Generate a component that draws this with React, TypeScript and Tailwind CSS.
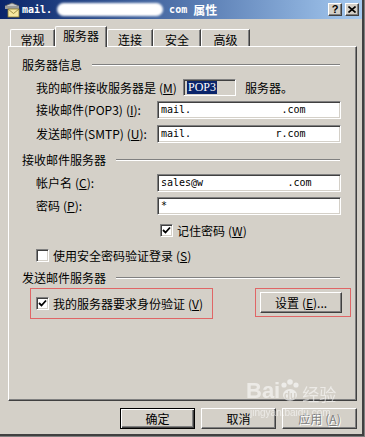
import React from "react";

const cjk = "font-['SimSun','Noto_Sans_CJK_SC',sans-serif]";
const mono = "font-['DejaVu_Sans_Mono',monospace]";

const raised =
  "bg-[#d4d0c8] border-t border-l border-t-white border-l-white border-r border-b border-r-[#404040] border-b-[#404040] shadow-[inset_-1px_-1px_0_#808080]";
const sunken =
  "border-t border-l border-t-[#808080] border-l-[#808080] border-r border-b border-r-white border-b-white shadow-[inset_1px_1px_0_#404040,inset_-1px_-1px_0_#d4d0c8]";

const Key = ({ k }: { k: string }) => (
  <span className="ml-[3px]">
    (<span className="underline underline-offset-1">{k}</span>)
  </span>
);

const GroupHeader = ({ title, mt }: { title: string; mt: string }) => (
  <div className={`flex items-center h-[14px] ml-[13px] mr-[16px] ${mt}`}>
    <span className="text-[12px] leading-none text-black pr-[10px]">{title}</span>
    <div className="flex-1 h-[2px] border-t border-t-[#808080] border-b border-b-white" />
  </div>
);

const TextBox = ({ value }: { value: string }) => (
  <div className={`w-[184px] h-[18px] bg-white flex items-center pl-[3px] ${sunken}`}>
    <span className={`${mono} text-[10px] leading-none text-black whitespace-pre`}>{value}</span>
  </div>
);

const Check = ({ checked }: { checked: boolean }) => (
  <div className={`w-[13px] h-[13px] bg-white flex items-center justify-center shrink-0 ${sunken}`}>
    {checked && (
      <svg width="9" height="9" viewBox="0 0 9 9">
        <path d="M1 4 L3.5 6.5 L8 1.5" stroke="#000" strokeWidth="1.8" fill="none" />
      </svg>
    )}
  </div>
);

const Tab = ({ label, width, selected }: { label: string; width: string; selected?: boolean }) =>
  selected ? (
    <div
      className={`${width} h-[21px] -mb-[1px] relative z-10 bg-[#d4d0c8] border-t border-l border-t-white border-l-white border-r border-r-[#404040] shadow-[inset_-1px_0_0_#808080] rounded-tl-[2px] flex justify-center pt-[2px] text-[12px] leading-[14px]`}
    >
      {label}
    </div>
  ) : (
    <div
      className={`${width} h-[17px] bg-[#d4d0c8] border-t border-l border-t-white border-l-white border-r border-r-[#404040] shadow-[inset_-1px_0_0_#808080] rounded-tl-[2px] flex justify-center pt-[3px] text-[12px] leading-[14px]`}
    >
      {label}
    </div>
  );

const Button = ({
  children,
  isDefault,
  disabled,
  className = "",
}: {
  children: React.ReactNode;
  isDefault?: boolean;
  disabled?: boolean;
  className?: string;
}) => (
  <div
    className={`h-[21px] flex items-center justify-center text-[12px] leading-none ${
      isDefault
        ? "bg-[#d4d0c8] border border-black shadow-[inset_1px_1px_0_#fff,inset_-1px_-1px_0_#404040,inset_-2px_-2px_0_#808080]"
        : raised
    } ${disabled ? "text-[#808080] [text-shadow:1px_1px_0_#fff]" : "text-black"} ${className}`}
  >
    {children}
  </div>
);

export default function App() {
  return (
    <div
      className={`${cjk} relative w-[365px] h-[437px] bg-[#d4d0c8] text-black border-r border-r-[#808080] border-b border-b-[#808080] shadow-[inset_-2px_-2px_0_#404040] overflow-hidden select-none`}
    >
      {/* title bar */}
      <div className="w-[362px] h-[19px] bg-gradient-to-r from-[#0a246a] to-[#a6caf0] flex items-center">
        <svg width="18" height="16" viewBox="0 0 18 16" className="ml-[3px]">
          <path d="M2 4 L9 1 L16 4 L9 7 Z" fill="#c8c8c8" stroke="#606060" strokeWidth="0.8" />
          <rect x="2" y="4" width="14" height="3" fill="#9a9a9a" />
          <rect x="5" y="7" width="11" height="8" fill="#f6e7a0" stroke="#8a7a30" strokeWidth="0.8" />
          <path d="M5 7 L10.5 11.5 L16 7" stroke="#8a7a30" strokeWidth="0.8" fill="none" />
        </svg>
        <span className={`${mono} text-[10px] font-bold text-white ml-[1px] leading-none`}>mail.</span>
        <div className="w-[106px] h-[13px] ml-[5px] bg-white rounded-full blur-[1px]" />
        <span className={`${mono} text-[10px] font-bold text-white ml-[6px] leading-none`}>com</span>
        <span className="text-[12px] font-bold text-white ml-[6px] leading-none">属性</span>
        <div className="flex-1" />
        <div className={`w-[14px] h-[13px] ${raised} flex items-center justify-center`}>
          <span className="font-['Liberation_Sans',sans-serif] text-[11px] font-bold leading-none">?</span>
        </div>
        <div className={`w-[14px] h-[13px] ml-[3px] mr-[3px] ${raised} flex items-center justify-center`}>
          <svg width="8" height="7" viewBox="0 0 8 7">
            <path d="M0.5 0.5 L7.5 6.5 M7.5 0.5 L0.5 6.5" stroke="#000" strokeWidth="1.6" />
          </svg>
        </div>
      </div>

      {/* tabs */}
      <div className="flex items-end h-[21px] mt-[6px] ml-[10px]">
        <Tab label="常规" width="w-[45px]" />
        <Tab label="服务器" width="w-[52px]" selected />
        <Tab label="连接" width="w-[46px]" />
        <Tab label="安全" width="w-[48px]" />
        <Tab label="高级" width="w-[49px]" />
      </div>

      {/* panel */}
      <div className="ml-[8px] w-[349px] h-[355px] border-t border-l border-t-white border-l-white border-r border-b border-r-[#404040] border-b-[#404040] shadow-[inset_-1px_-1px_0_#808080] flex flex-col text-[12px] leading-none">
        <GroupHeader title="服务器信息" mt="mt-[11px]" />

        <div className="flex items-center h-[17px] mt-[7px] ml-[27px]">
          <span className="w-[147px]">
            我的邮件接收服务器是<Key k="M" />
          </span>
          <div className={`w-[53px] h-[17px] flex items-center pl-[3px] ${sunken}`}>
            <span className="bg-[#0a246a] text-white px-[1px] leading-[13px] font-['Liberation_Serif',serif] text-[12px]">
              POP3
            </span>
          </div>
          <span className="ml-[9px]">服务器。</span>
        </div>

        <div className="flex items-center h-[18px] mt-[5px] ml-[27px]">
          <span className="w-[121px]">
            接收邮件(POP3)<Key k="I" />:
          </span>
          <TextBox value={"mail.               .com"} />
        </div>

        <div className="flex items-center h-[18px] mt-[6px] ml-[27px]">
          <span className="w-[121px]">
            发送邮件(SMTP)<Key k="U" />:
          </span>
          <TextBox value={"mail.              r.com"} />
        </div>

        <GroupHeader title="接收邮件服务器" mt="mt-[10px]" />

        <div className="flex items-center h-[18px] mt-[7px] ml-[27px]">
          <span className="w-[121px]">
            帐户名<Key k="C" />:
          </span>
          <TextBox value={"sales@w              .com"} />
        </div>

        <div className="flex items-center h-[18px] mt-[5px] ml-[27px]">
          <span className="w-[121px]">
            密码<Key k="P" />:
          </span>
          <TextBox value={"*"} />
        </div>

        <div className="flex items-center h-[13px] mt-[9px] ml-[151px]">
          <Check checked />
          <span className="ml-[4px]">
            记住密码<Key k="W" />
          </span>
        </div>

        <div className="flex items-center h-[13px] mt-[12px] ml-[27px]">
          <Check checked={false} />
          <span className="ml-[4px]">
            使用安全密码验证登录<Key k="S" />
          </span>
        </div>

        <GroupHeader title="发送邮件服务器" mt="mt-[9px]" />

        <div className="flex items-start h-[31px] mt-[3px]">
          <div className="ml-[21px] w-[183px] h-[31px] border border-[#e06666] flex items-center pl-[5px]">
            <Check checked />
            <span className="ml-[4px]">
              我的服务器要求身份验证<Key k="V" />
            </span>
          </div>
          <div className="ml-[42px] w-[96px] h-[29px] border border-[#e06666] flex items-center pl-[4px]">
            <Button className="w-[82px]">
              设置<Key k="E" />...
            </Button>
          </div>
        </div>
      </div>

      {/* dialog buttons */}
      <div className="flex mt-[7px] ml-[120px] gap-[6px]">
        <Button isDefault className="w-[75px]">
          确定
        </Button>
        <Button className="w-[75px]">取消</Button>
        <Button disabled className="w-[75px]">
          应用<Key k="A" />
        </Button>
      </div>

      {/* baidu watermark */}
      <div className="absolute left-[246px] top-[378px] pointer-events-none opacity-70 flex flex-col items-start">
        <div className="flex items-end">
          <span className="font-['Liberation_Sans',sans-serif] font-bold text-[22px] leading-none text-white/80">Bai</span>
          <svg width="22" height="24" viewBox="0 0 22 24" className="-mx-[1px]">
            <circle cx="5" cy="7" r="2.6" fill="#fff" fillOpacity="0.85" />
            <circle cx="11" cy="4" r="2.8" fill="#fff" fillOpacity="0.85" />
            <circle cx="17" cy="7" r="2.6" fill="#fff" fillOpacity="0.85" />
            <ellipse cx="11" cy="17" rx="7" ry="6" fill="#fff" fillOpacity="0.85" />
            <text x="11" y="21" textAnchor="middle" fontSize="10" fontWeight="bold" fill="#d4d0c8" fontFamily="Liberation Sans">du</text>
          </svg>
          <span className="text-[17px] leading-none text-white/80 ml-[2px]">经验</span>
        </div>
        <span className="font-['Liberation_Sans',sans-serif] text-[10px] leading-none text-white/80 mt-[6px] ml-[4px]">
          jingyan.baidu.com
        </span>
      </div>
    </div>
  );
}
